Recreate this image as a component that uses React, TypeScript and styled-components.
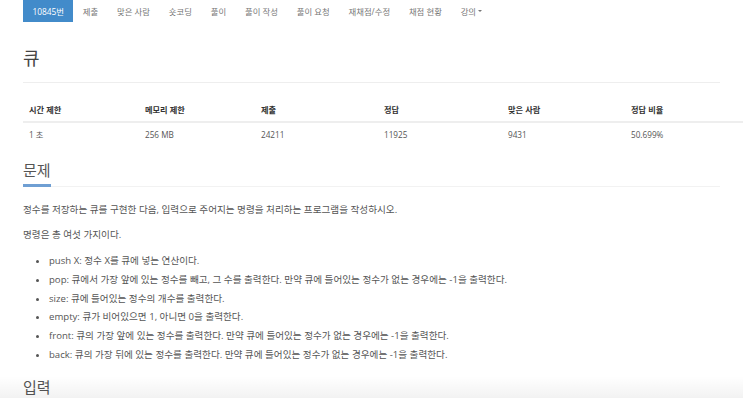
import React from 'react'
import styled, { createGlobalStyle } from 'styled-components'

const GlobalStyle = createGlobalStyle`
  html, body {
    margin: 0;
    padding: 0;
    background: #fff;
    overflow: hidden;
  }
  body {
    font-family: "Open Sans", "Noto Sans CJK KR", sans-serif;
    color: #555;
  }
`

const Page = styled.div`
  width: 743px;
  height: 398px;
  overflow: hidden;
  position: relative;
`

const Nav = styled.ul`
  display: flex;
  list-style: none;
  margin: 0;
  padding: 0 0 0 23px;
  height: 22px;
`

const Tab = styled.li<{ $active?: boolean }>`
  display: flex;
  align-items: center;
  padding: 0 9.4px;
  font-size: 8.4px;
  color: ${(p) => (p.$active ? '#fff' : '#777')};
  background: ${(p) => (p.$active ? '#428bca' : 'transparent')};
  white-space: nowrap;
`

const Caret = styled.span`
  display: inline-block;
  margin-left: 2px;
  width: 0;
  height: 0;
  border-top: 2.5px solid #777;
  border-left: 2.5px solid transparent;
  border-right: 2.5px solid transparent;
`

const Content = styled.div`
  padding: 0 23px;
`

const Title = styled.h1`
  margin: 24px 0 0;
  padding-bottom: 12px;
  font-size: 18px;
  font-weight: 400;
  color: #444;
  line-height: 24px;
  border-bottom: 1px solid #eee;
`

const Table = styled.table`
  width: 745px;
  border-collapse: collapse;
  margin-top: 13px;
  font-size: 8.2px;
  table-layout: fixed;
`

const Th = styled.th<{ $w: number }>`
  width: ${(p) => p.$w}px;
  text-align: left;
  font-weight: 700;
  color: #333;
  padding: 7px 6px 6px;
  border-bottom: 2px solid #eee;
  height: 10px;
  white-space: nowrap;
`

const Td = styled.td`
  padding: 5px 6px;
  color: #555;
  white-space: nowrap;
`

const Section = styled.div<{ $gap: number }>`
  margin-top: ${(p) => p.$gap}px;
  border-bottom: 1px solid #f2f2f2;
`

const SectionTitle = styled.h2`
  display: inline-block;
  margin: 0 0 -1px;
  font-size: 15px;
  font-weight: 400;
  line-height: 20px;
  color: #555;
  padding-bottom: 4px;
  border-bottom: 3px solid #6f9fd3;
`

const Paragraph = styled.p`
  margin: 0 0 9px;
  font-size: 9.6px;
  line-height: 16px;
  color: #555;
  &:first-of-type {
    margin-top: 15px;
  }
`

const List = styled.ul`
  margin: 9px 0 0;
  padding-left: 26px;
  font-size: 9.6px;
  line-height: 18.8px;
  color: #555;
  li::marker {
    font-size: 9px;
  }
`

const BottomShade = styled.div`
  position: absolute;
  left: 0;
  right: 0;
  bottom: 0;
  height: 22px;
  background: linear-gradient(to bottom, rgba(0, 0, 0, 0), rgba(0, 0, 0, 0.05));
  pointer-events: none;
`

const tabs = ['제출', '맞은 사람', '숏코딩', '풀이', '풀이 작성', '풀이 요청', '재채점/수정', '채점 현황']

const heads: [string, number][] = [
  ['시간 제한', 104],
  ['메모리 제한', 104],
  ['제출', 111],
  ['정답', 112],
  ['맞은 사람', 111],
  ['정답 비율', 131],
]

const values = ['1 초', '256 MB', '24211', '11925', '9431', '50.699%']

const items = [
  'push X: 정수 X를 큐에 넣는 연산이다.',
  'pop: 큐에서 가장 앞에 있는 정수를 빼고, 그 수를 출력한다. 만약 큐에 들어있는 정수가 없는 경우에는 -1을 출력한다.',
  'size: 큐에 들어있는 정수의 개수를 출력한다.',
  'empty: 큐가 비어있으면 1, 아니면 0을 출력한다.',
  'front: 큐의 가장 앞에 있는 정수를 출력한다. 만약 큐에 들어있는 정수가 없는 경우에는 -1을 출력한다.',
  'back: 큐의 가장 뒤에 있는 정수를 출력한다. 만약 큐에 들어있는 정수가 없는 경우에는 -1을 출력한다.',
]

export default function App() {
  return (
    <Page>
      <GlobalStyle />
      <Nav>
        <Tab $active>10845번</Tab>
        {tabs.map((t) => (
          <Tab key={t}>{t}</Tab>
        ))}
        <Tab>
          강의
          <Caret />
        </Tab>
      </Nav>
      <Content>
        <Title>큐</Title>
        <Table>
          <thead>
            <tr>
              {heads.map(([h, w]) => (
                <Th key={h} $w={w}>
                  {h}
                </Th>
              ))}
            </tr>
          </thead>
          <tbody>
            <tr>
              {values.map((v) => (
                <Td key={v}>{v}</Td>
              ))}
            </tr>
          </tbody>
        </Table>
        <Section $gap={14}>
          <SectionTitle>문제</SectionTitle>
        </Section>
        <Paragraph>정수를 저장하는 큐를 구현한 다음, 입력으로 주어지는 명령을 처리하는 프로그램을 작성하시오.</Paragraph>
        <Paragraph>명령은 총 여섯 가지이다.</Paragraph>
        <List>
          {items.map((i) => (
            <li key={i}>{i}</li>
          ))}
        </List>
        <Section $gap={11}>
          <SectionTitle>입력</SectionTitle>
        </Section>
      </Content>
      <BottomShade />
    </Page>
  )
}
